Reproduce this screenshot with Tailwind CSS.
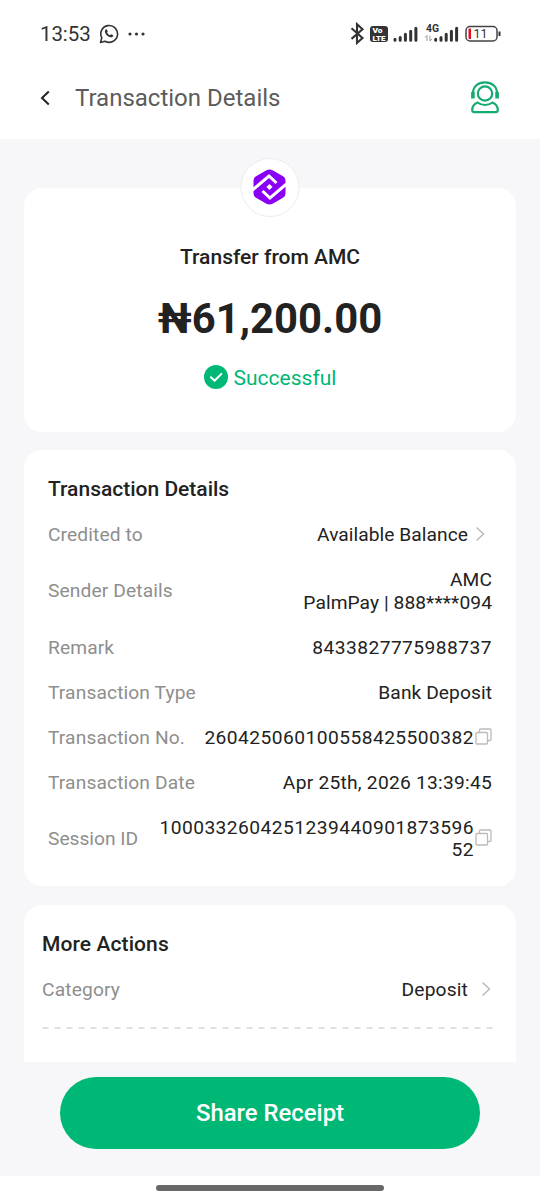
<!DOCTYPE html>
<html lang="en">
<head>
<meta charset="utf-8">
<title>Transaction Details</title>
<script src="https://cdn.jsdelivr.net/npm/@tailwindcss/browser@4"></script>
</head>
<body class="w-[540px] h-[1200px] overflow-hidden bg-[#f7f7fa] font-['Roboto',sans-serif] text-[#222] flex flex-col">
  <header class="h-[139px] shrink-0 bg-white">
    <div class="h-[68px] flex items-center pl-10 pr-[39px] text-[#333]">
      <span class="text-[20.5px] leading-6 tracking-[-0.1px]">13:53</span>
      <svg class="ml-2 w-5 h-5" viewBox="0 0 20 20" fill="none" stroke="#333" stroke-width="1.6"><path d="M1.500 18.500l1.300-4.600A8.400 8.400 0 1 1 6 17.200z" stroke-linejoin="round"/><path d="M6.600 5.600c.6-.5 1.200-.4 1.500.3l.6 1.300c.2.6-.6 1-.5 1.500.6 1.200 1.500 2 2.700 2.500.6 0 .8-1 1.400-.9l1.500.7c.6.4.5 1-.1 1.700-1.200 1.200-3.200.6-5.100-.7C6.400 10.300 5 7.300 6.600 5.600z" fill="#333" stroke="none"/></svg>
      <svg class="ml-[9px] w-[18px] h-1" viewBox="0 0 18 4" fill="#333"><circle cx="2" cy="2" r="1.600"/><circle cx="8.500" cy="2" r="1.600"/><circle cx="15" cy="2" r="1.600"/></svg>
      <div class="ml-auto flex items-center">
        <svg class="w-[151px] h-[24px]" viewBox="350 22 151 24" fill="none">
          <path d="M351.500 28.300l11 9.700-5.500 5V24.200l5.500 5-11 9.700" stroke="#333" stroke-width="2.100"/>
          <rect x="370" y="26" width="18" height="16" rx="3" fill="#333"/>
          <text x="372.500" y="33.300" font-family="Roboto" font-weight="900" font-size="8" fill="#fff" textLength="10" lengthAdjust="spacingAndGlyphs">Vo</text>
          <text x="372.500" y="40.500" font-family="Roboto" font-weight="900" font-size="8" fill="#fff" textLength="13" lengthAdjust="spacingAndGlyphs">LTE</text>
          <path d="M395 40.200v-1M400.200 40.200v-2.800M405.400 40.200v-6M410.700 40.200v-9M415.900 40.200v-12" stroke="#333" stroke-width="3" stroke-linecap="round"/>
          <text x="426" y="32.300" font-family="Roboto" font-weight="700" font-size="10" fill="#333" textLength="13" lengthAdjust="spacingAndGlyphs">4G</text>
          <path d="M427 41v-5.500l-2 2M430 35.500V41l2-2" stroke="#999" stroke-width="1"/>
          <path d="M435.700 40.200v-1M441 40.200v-2.800M446.200 40.200v-6M451.400 40.200v-9M456.600 40.200v-12" stroke="#333" stroke-width="3" stroke-linecap="round"/>
          <rect x="466" y="26.500" width="31" height="14.500" rx="4" stroke="#444" stroke-width="1.500"/>
          <path d="M468.500 29.500q0-1 1-1h1.500v10.500h-1.500q-1 0-1-1z" fill="#e00f20"/>
          <text x="473.500" y="38" font-family="Roboto" font-size="12.500" fill="#333" textLength="14">11</text>
          <path d="M499.500 31.500v4.500" stroke="#333" stroke-width="2"/>
        </svg>
      </div>
    </div>
    <div class="h-[60px] flex items-center pl-10 pr-10">
      <svg class="w-[10px] h-[16px]" viewBox="0 0 10 16" fill="none" stroke="#222" stroke-width="2"><path d="M8.800 1.500L2 8l6.800 6.500"/></svg>
      <h1 class="ml-[25px] text-[24px] leading-7 text-[#5c5c5c]">Transaction Details</h1>
      <svg class="ml-auto w-[30px] h-[34px]" viewBox="0 0 30 34" fill="none" stroke="#14ab71" stroke-width="2.200"><circle cx="15" cy="12.500" r="7.200"/><path d="M3 12.500V12C3 5.500 8 1.300 15 1.300S27 5.500 27 12v.5"/><path d="M2.900 11v6.500M27.100 11v6.500" stroke-width="3.600"/><path d="M7.600 21.500C4.500 22.500 2.500 25.500 2.200 28.500c-.1 1.700.7 2.700 2 2.700h21.600c1.300 0 2.100-1 2-2.700-.3-3-2.300-6-5.400-7-4 3.300-10.800 3.300-14.800 0z" stroke-linejoin="round"/></svg>
    </div>
  </header>

  <main class="h-[923px] shrink-0 overflow-hidden px-6 pt-[49px]">
    <section class="relative h-[244px] rounded-[18px] bg-white flex flex-col items-center pt-[55px]">
      <div class="absolute left-1/2 -top-[30px] -translate-x-1/2 size-[59px] rounded-full bg-white border border-[#ededf1] flex items-center justify-center pr-[2px] pb-[1px]">
        <svg class="w-[34px] h-[36px]" viewBox="0 0 34 36"><path d="M17 .5q1.500 0 3 .8l10.500 6q2.500 1.400 2.500 4.200v13q0 2.800-2.500 4.200L20 34.700q-3 1.600-6 0L3.500 28.700Q1 27.300 1 24.500v-13Q1 8.700 3.500 7.300L14 1.300q1.500-.8 3-.8z" fill="#8a00f5"/><g fill="none" stroke="#fff" stroke-width="3"><path d="M0 21L16.500 7l7.500 7"/><path d="M34 15L17.500 29 10 22"/></g><path d="M17 14.900l3.100 3.100-3.100 3.100-3.100-3.100z" fill="#fff"/></svg>
      </div>
      <p class="text-[21px] leading-7 font-medium">Transfer from AMC</p>
      <p class="mt-[23px] text-[41.8px] leading-[50px] font-bold">₦61,200.00</p>
      <div class="mt-[20px] flex items-center gap-[6px] text-[#00b875]">
        <svg class="size-6 -mt-[2px]" viewBox="0 0 24 24"><circle cx="12" cy="12" r="12" fill="#00b875"/><path d="M7 12.200l3.600 3.500 6.800-6.800" fill="none" stroke="#fff" stroke-width="2" stroke-linecap="round" stroke-linejoin="round"/></svg>
        <span class="text-[21px] leading-7">Successful</span>
      </div>
    </section>

    <section class="mt-[18px] h-[436px] rounded-[18px] bg-white px-6 pt-[25px] text-[19.2px] leading-[22.5px]">
      <h2 class="text-[21px] leading-7 font-medium">Transaction Details</h2>
      <dl class="mt-[21px] flex flex-col gap-[22.5px] tracking-[0.12px]">
        <div class="flex items-center justify-between"><dt class="text-[#8e8e8e]">Credited to</dt><dd class="flex items-center gap-[7px] pr-[7px] tracking-[0.05px]">Available Balance<svg class="w-[10px] h-[16px] mb-[2px]" viewBox="0 0 10 16" fill="none" stroke="#bbb" stroke-width="1.500"><path d="M1.500 1.500L8.500 8l-7 6.500"/></svg></dd></div>
        <div class="flex items-center justify-between"><dt class="text-[#8e8e8e]">Sender Details</dt><dd class="text-right tracking-[0.07px]">AMC<br>PalmPay | 888****094</dd></div>
        <div class="flex items-center justify-between"><dt class="text-[#8e8e8e]">Remark</dt><dd class="tracking-[0.45px]">8433827775988737</dd></div>
        <div class="flex items-center justify-between"><dt class="text-[#8e8e8e]">Transaction Type</dt><dd class="tracking-[0.07px]">Bank Deposit</dd></div>
        <div class="flex items-center justify-between"><dt class="text-[#8e8e8e]">Transaction No.</dt><dd class="flex items-center tracking-[0.45px]">260425060100558425500382<svg class="ml-px mb-[2px] w-[17px] h-[17px]" viewBox="0 0 17 17" fill="none" stroke="#bbb" stroke-width="1.300"><rect x="1" y="4.500" width="11.500" height="11.500" rx="1"/><path d="M4.500 4.500V2q0-1 1-1H15q1 0 1 1v9.500q0 1-1 1h-2.500"/></svg></dd></div>
        <div class="flex items-center justify-between"><dt class="text-[#8e8e8e]">Transaction Date</dt><dd class="tracking-[0.25px]">Apr 25th, 2026 13:39:45</dd></div>
        <div class="flex items-center justify-between"><dt class="text-[#8e8e8e] tracking-[0px]">Session ID</dt><dd class="flex items-center text-right tracking-[0.45px]"><span>1000332604251239440901873596<br>52</span><svg class="ml-px mb-[3px] w-[17px] h-[17px]" viewBox="0 0 17 17" fill="none" stroke="#bbb" stroke-width="1.300"><rect x="1" y="4.500" width="11.500" height="11.500" rx="1"/><path d="M4.500 4.500V2q0-1 1-1H15q1 0 1 1v9.500q0 1-1 1h-2.500"/></svg></dd></div>
      </dl>
    </section>

    <section class="mt-[19px] h-[180px] rounded-[18px] bg-white px-[18px] pt-[25px] text-[19.2px] leading-[22.5px]">
      <h2 class="text-[21px] leading-7 font-medium tracking-[0.1px]">More Actions</h2>
      <div class="mt-[21px] flex items-center justify-between pr-[7px] tracking-[0.15px]"><span class="text-[#8e8e8e]">Category</span><span class="flex items-center gap-[13px]">Deposit<svg class="w-[10px] h-[16px] mb-[2px]" viewBox="0 0 10 16" fill="none" stroke="#bbb" stroke-width="1.500"><path d="M1.500 1.500L8.500 8l-7 6.500"/></svg></span></div>
      <svg class="mt-[25px] w-[452px] h-[2px]" viewBox="0 0 452 2"><path d="M.5 1H452" stroke="#c4c4c4" stroke-width="1.200" stroke-dasharray="6 6"/></svg>
    </section>
  </main>

  <footer class="flex-1 flex flex-col">
    <div class="h-[114px] px-[60px] pt-[15px]">
      <button class="w-full h-[72px] pt-[2px] rounded-full bg-[#00b875] text-white text-[23.900px] font-medium">Share Receipt</button>
    </div>
    <div class="flex-1 bg-white flex justify-center pt-[9px]"><div class="w-[228px] h-[6px] rounded-full bg-[#686868]"></div></div>
  </footer>
</body>
</html>
